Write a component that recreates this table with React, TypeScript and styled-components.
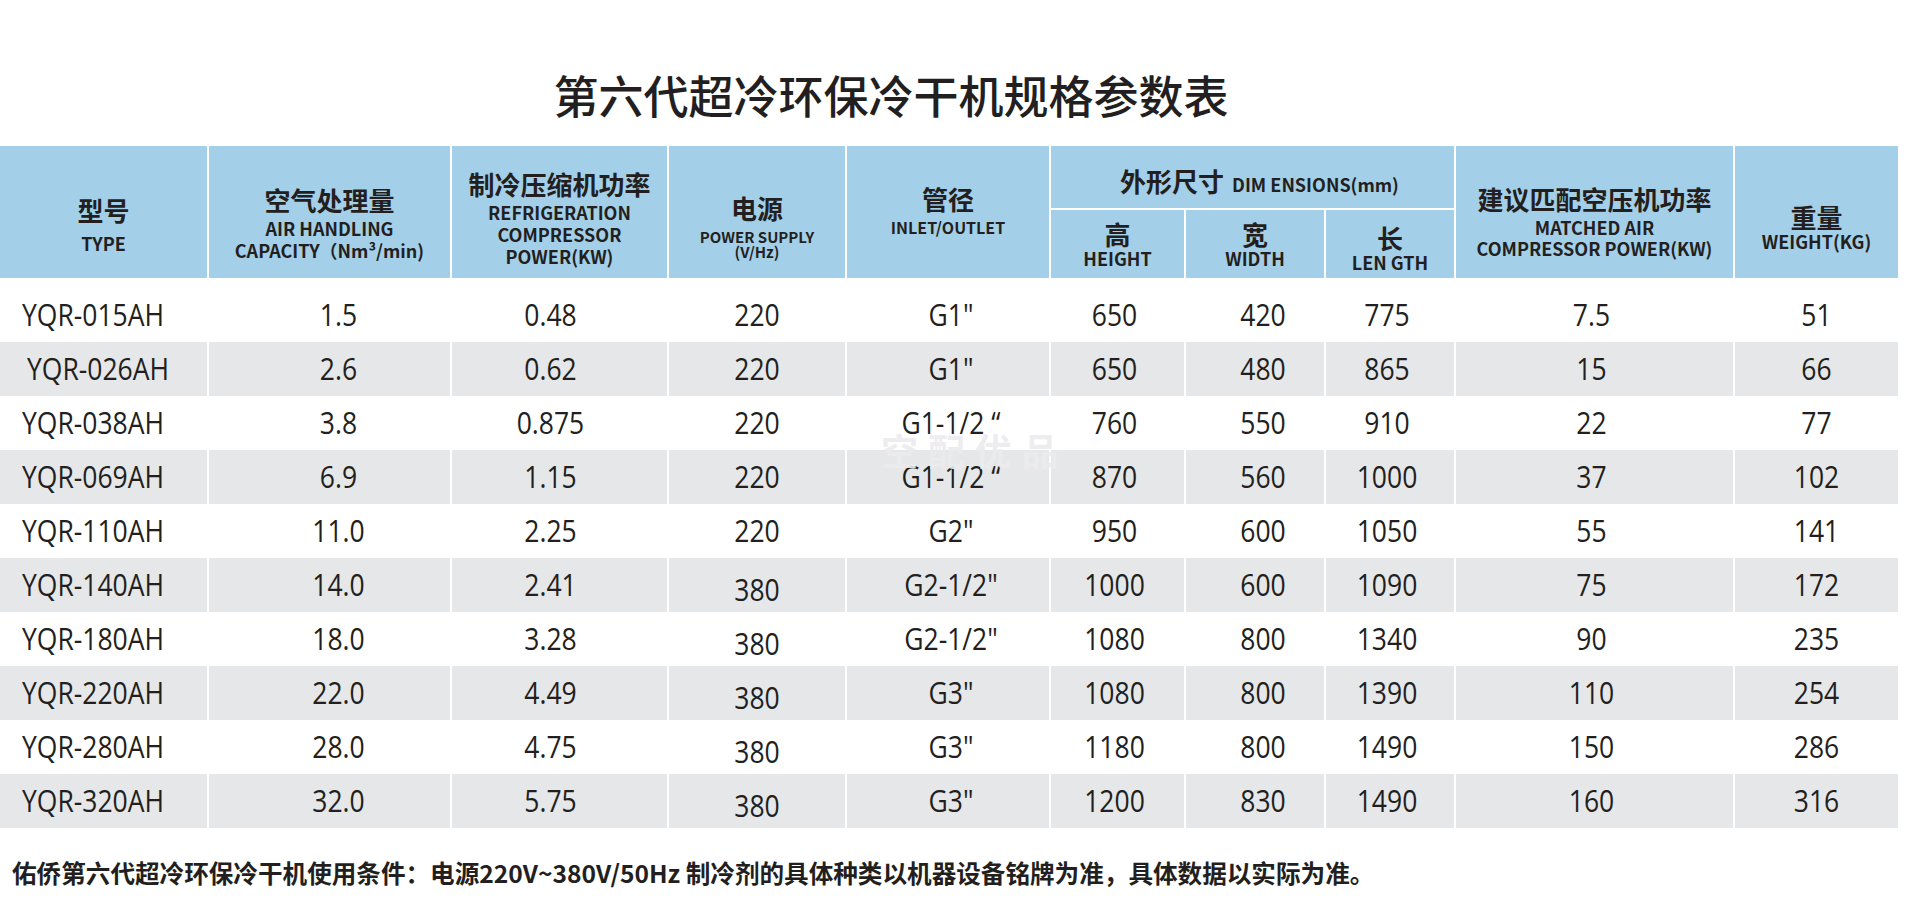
import React from 'react';
import styled, { createGlobalStyle } from 'styled-components';

const GlobalStyle = createGlobalStyle`
  html, body { margin: 0; padding: 0; background: #ffffff; }
  body {
    font-family: "Noto Sans CJK SC", "Noto Sans", sans-serif;
    color: #231f20;
  }
`;

const COLS = '207px 241px 215px 176px 202px 133px 138px 128px 277px 163px';
const HEAD_BG = '#a3cfe8';
const ROW_GRAY = '#e6e7e9';

const Page = styled.div`
  position: relative;
  width: 1920px;
  height: 911px;
  overflow: hidden;
`;

const Title = styled.h1`
  margin: 0;
  height: 146px;
  box-sizing: border-box;
  padding: 72px 138px 0 0;
  text-align: center;
  font-size: 45px;
  line-height: 45px;
  font-weight: 500;
  color: #231f20;
`;

const Table = styled.div`
  width: 1898px;
`;

const HeadGrid = styled.div`
  display: grid;
  grid-template-columns: ${COLS};
  grid-template-rows: 62px 68px;
  column-gap: 2px;
  row-gap: 2px;
  background: #ffffff;
`;

const HeadCell = styled.div<{ $col: string; $row: string; $pt?: number; $pb?: number; $gap?: number }>`
  grid-column: ${(p) => p.$col};
  grid-row: ${(p) => p.$row};
  background: ${HEAD_BG};
  box-sizing: border-box;
  padding-top: ${(p) => p.$pt ?? 0}px;
  padding-bottom: ${(p) => p.$pb ?? 0}px;
  display: flex;
  flex-direction: column;
  align-items: center;
  justify-content: center;
  text-align: center;
  font-weight: 700;
  & > *:nth-child(2) { margin-top: ${(p) => p.$gap ?? 0}px; }
`;

const Cn = styled.div`
  padding-top: 2px;
  font-size: 26px;
  line-height: 26px;
  font-weight: 700;
  white-space: nowrap;
`;

const En = styled.div<{ $size?: number; $lh?: number }>`
  font-size: ${(p) => p.$size ?? 18}px;
  line-height: ${(p) => p.$lh ?? 22}px;
  font-weight: 700;
  white-space: nowrap;
`;

const InlineHead = styled.div`
  display: flex;
  align-items: baseline;
  gap: 8px;
  padding-left: 14px;
  white-space: nowrap;
`;

const Row = styled.div<{ $tall?: boolean }>`
  display: grid;
  grid-template-columns: ${COLS};
  column-gap: 2px;
  height: ${(p) => (p.$tall ? 64 : 54)}px;
`;

const Cell = styled.div<{ $shade: boolean; $left?: boolean; $pl?: number; $pr?: number; $pt?: number }>`
  background: ${(p) => (p.$shade ? ROW_GRAY : '#ffffff')};
  box-sizing: border-box;
  display: flex;
  align-items: center;
  justify-content: ${(p) => (p.$left ? 'flex-start' : 'center')};
  padding-left: ${(p) => p.$pl ?? 0}px;
  padding-right: ${(p) => p.$pr ?? 0}px;
  padding-top: ${(p) => p.$pt ?? 0}px;
`;

const Value = styled.span`
  display: inline-block;
  font-family: "Open Sans", "Noto Sans", sans-serif;
  font-size: 26.5px;
  line-height: 26px;
  color: #231f20;
  white-space: nowrap;
  transform: scaleY(1.15);
`;

const Watermark = styled.div`
  position: absolute;
  left: 881px;
  top: 432px;
  font-size: 37px;
  line-height: 37px;
  font-weight: 700;
  letter-spacing: 10px;
  color: rgba(236, 236, 238, 0.92);
  pointer-events: none;
`;

const Footer = styled.p`
  margin: 29px 0 0;
  padding-left: 12px;
  font-size: 24.6px;
  line-height: 30px;
  font-weight: 700;
  white-space: nowrap;
  color: #231f20;
`;

type RowData = string[];

const rows: RowData[] = [
  ['YQR-015AH', '1.5', '0.48', '220', 'G1"', '650', '420', '775', '7.5', '51'],
  ['YQR-026AH', '2.6', '0.62', '220', 'G1"', '650', '480', '865', '15', '66'],
  ['YQR-038AH', '3.8', '0.875', '220', 'G1-1/2 “', '760', '550', '910', '22', '77'],
  ['YQR-069AH', '6.9', '1.15', '220', 'G1-1/2 “', '870', '560', '1000', '37', '102'],
  ['YQR-110AH', '11.0', '2.25', '220', 'G2"', '950', '600', '1050', '55', '141'],
  ['YQR-140AH', '14.0', '2.41', '380', 'G2-1/2"', '1000', '600', '1090', '75', '172'],
  ['YQR-180AH', '18.0', '3.28', '380', 'G2-1/2"', '1080', '800', '1340', '90', '235'],
  ['YQR-220AH', '22.0', '4.49', '380', 'G3"', '1080', '800', '1390', '110', '254'],
  ['YQR-280AH', '28.0', '4.75', '380', 'G3"', '1180', '800', '1490', '150', '286'],
  ['YQR-320AH', '32.0', '5.75', '380', 'G3"', '1200', '830', '1490', '160', '316'],
];

// horizontal nudges per column: [paddingLeft, paddingRight]
const colPad: [number, number][] = [
  [22, 0],
  [18, 0],
  [0, 18],
  [0, 0],
  [6, 0],
  [0, 6],
  [16, 0],
  [0, 6],
  [0, 6],
  [0, 0],
];

export default function App() {
  return (
    <Page>
      <GlobalStyle />
      <Title>第六代超冷环保冷干机规格参数表</Title>
      <Table>
        <HeadGrid>
          <HeadCell $col="1" $row="1 / span 2" $pt={25} $gap={9}>
            <Cn>型号</Cn>
            <En>TYPE</En>
          </HeadCell>
          <HeadCell $col="2" $row="1 / span 2" $pt={22} $gap={4}>
            <Cn>空气处理量</Cn>
            <div>
              <En>AIR HANDLING</En>
              <En>CAPACITY（Nm³/min)</En>
            </div>
          </HeadCell>
          <HeadCell $col="3" $row="1 / span 2" $pt={12} $gap={4}>
            <Cn>制冷压缩机功率</Cn>
            <div>
              <En>REFRIGERATION</En>
              <En>COMPRESSOR</En>
              <En>POWER(KW)</En>
            </div>
          </HeadCell>
          <HeadCell $col="4" $row="1 / span 2" $pt={27} $gap={8}>
            <Cn>电源</Cn>
            <div>
              <En $size={15} $lh={15}>POWER SUPPLY</En>
              <En $size={15} $lh={15}>(V/Hz)</En>
            </div>
          </HeadCell>
          <HeadCell $col="5" $row="1 / span 2" $pb={6} $gap={7}>
            <Cn>管径</Cn>
            <En $size={16} $lh={16}>INLET/OUTLET</En>
          </HeadCell>
          <HeadCell $col="6 / span 3" $row="1" $pt={6}>
            <InlineHead>
              <Cn>外形尺寸</Cn>
              <En>DIM ENSIONS(mm)</En>
            </InlineHead>
          </HeadCell>
          <HeadCell $col="6" $row="2" $gap={0}>
            <Cn>高</Cn>
            <En>HEIGHT</En>
          </HeadCell>
          <HeadCell $col="7" $row="2" $gap={0}>
            <Cn>宽</Cn>
            <En>WIDTH</En>
          </HeadCell>
          <HeadCell $col="8" $row="2" $pt={7} $gap={0}>
            <Cn>长</Cn>
            <En>LEN GTH</En>
          </HeadCell>
          <HeadCell $col="9" $row="1 / span 2" $pt={18} $gap={5}>
            <Cn>建议匹配空压机功率</Cn>
            <div>
              <En $lh={21}>MATCHED AIR</En>
              <En $lh={21}>COMPRESSOR POWER(KW)</En>
            </div>
          </HeadCell>
          <HeadCell $col="10" $row="1 / span 2" $pt={29} $gap={0}>
            <Cn>重量</Cn>
            <En>WEIGHT(KG)</En>
          </HeadCell>
        </HeadGrid>

        {rows.map((r, i) => {
          const shade = i % 2 === 1;
          const tall = i === 0;
          return (
            <Row key={r[0]} $tall={tall}>
              {r.map((v, c) => {
                const [pl, pr] = colPad[c];
                const extraLeft = c === 0 && i === 1 ? 5 : 0;
                const drop = c === 3 && v === '380' ? 9 : 0;
                return (
                  <Cell
                    key={c}
                    $shade={shade}
                    $left={c === 0}
                    $pl={pl + extraLeft}
                    $pr={pr}
                    $pt={(tall ? 10 : 0) + drop}
                  >
                    <Value>{v}</Value>
                  </Cell>
                );
              })}
            </Row>
          );
        })}
      </Table>
      <Watermark>空配优品</Watermark>
      <Footer>佑侨第六代超冷环保冷干机使用条件：电源220V~380V/50Hz 制冷剂的具体种类以机器设备铭牌为准，具体数据以实际为准。</Footer>
    </Page>
  );
}
